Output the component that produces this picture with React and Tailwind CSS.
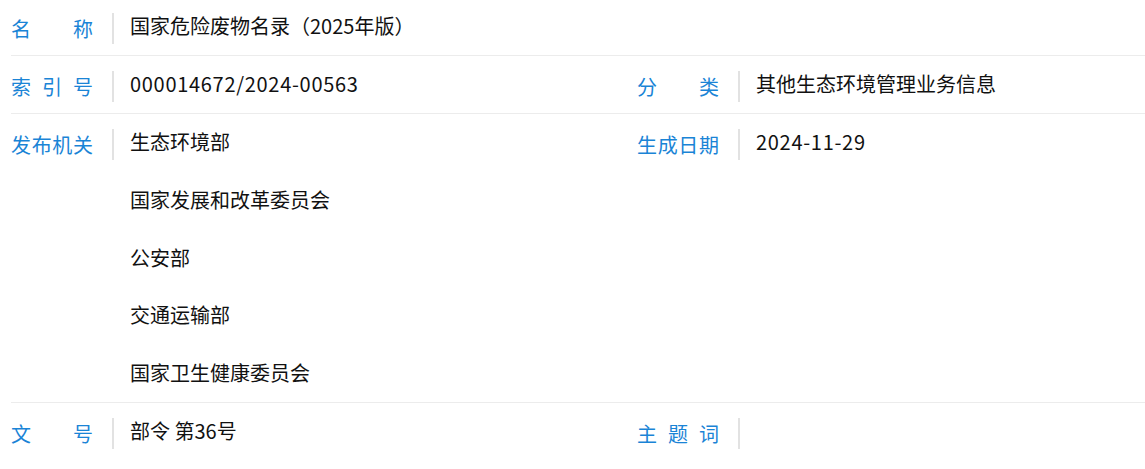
const rows = [
  { left: { label: '名称', values: ['国家危险废物名录（2025年版）'] }, first: true },
  {
    left: { label: '索引号', values: ['000014672/2024-00563'], num: true },
    right: { label: '分类', values: ['其他生态环境管理业务信息'] },
  },
  {
    left: {
      label: '发布机关',
      values: ['生态环境部', '国家发展和改革委员会', '公安部', '交通运输部', '国家卫生健康委员会'],
    },
    right: { label: '生成日期', values: ['2024-11-29'], num: true },
  },
  {
    left: { label: '文号', values: ['部令 第36号'] },
    right: { label: '主题词', values: [''] },
    last: true,
  },
]

function Cell({ item }) {
  return (
    <div className="flex items-start">
      <div className="w-[82px] shrink-0 h-[31px] leading-[32px] text-[#1a84d6] [text-align-last:justify] whitespace-nowrap">
        {item.label}
      </div>
      <div className="w-[2px] h-[31px] bg-[#e2e2e2] ml-[19px] mr-[16px] shrink-0" />
      <div className={`flex flex-col gap-[26.75px] text-[#111] ${item.num ? 'tracking-[0.7px]' : ''}`}>
        {item.values.map((v, i) => (
          <div key={i} className="h-[31px] leading-[26px] whitespace-nowrap">
            {v}
          </div>
        ))}
      </div>
    </div>
  )
}

export default function App() {
  return (
    <div
      className="w-[1145px] h-[469px] overflow-hidden bg-white pl-[11px] text-[20px]"
      style={{ fontFamily: '"Noto Sans CJK SC", "Noto Sans", sans-serif' }}
    >
      {rows.map((row, i) => (
        <div
          key={i}
          className={`flex w-[1300px] ${row.first ? 'pt-[13px]' : 'pt-[15px]'} ${row.last ? 'pb-[20px]' : 'pb-[11px] border-b border-[#ececec]'}`}
        >
          <div className="w-[626px] shrink-0">
            <Cell item={row.left} />
          </div>
          <div className="flex-1">{row.right && <Cell item={row.right} />}</div>
        </div>
      ))}
    </div>
  )
}
